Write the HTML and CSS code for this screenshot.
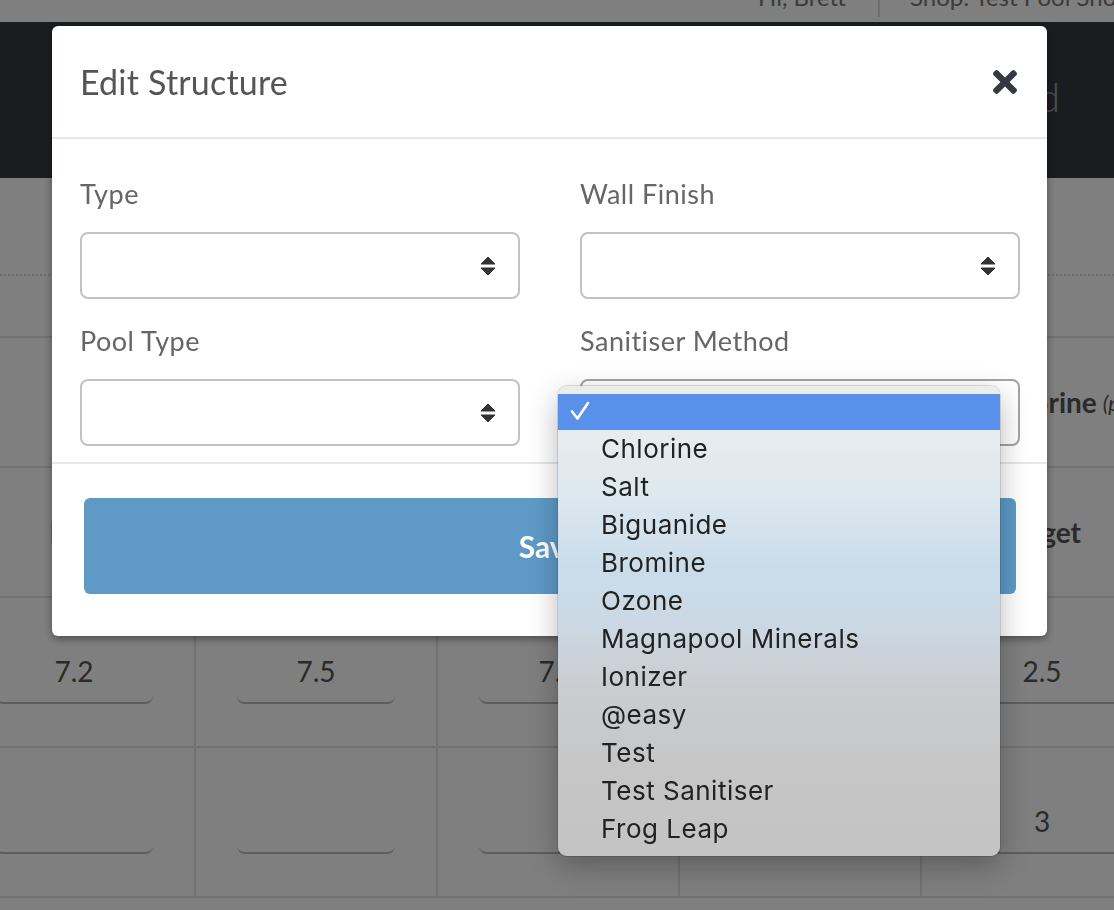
FILE: index.html
```html
<!DOCTYPE html>
<html lang="en">
<head>
<meta charset="utf-8">
<title>Edit Structure</title>
<link rel="stylesheet" href="styles.css">
</head>
<body>
  <div class="page">
    <header class="topbar">
      <span class="greet">Hi, Brett</span>
      <span class="divider"></span>
      <span class="shop">Shop: Test Pool Shop</span>
    </header>
    <nav class="navbar">
      <h1 class="brand">Water Test Dashboard</h1>
    </nav>
    <main class="content">
      <div class="toolbar"></div>
      <div class="readings">
        <div class="cell head">pH</div>
        <div class="cell head"></div>
        <div class="cell head"></div>
        <div class="cell head"></div>
        <div class="cell head">Free Chlorine <em>(ppm)</em></div>

        <div class="cell head">Min</div>
        <div class="cell head">Max</div>
        <div class="cell head">Ideal</div>
        <div class="cell head">Min</div>
        <div class="cell head">Target</div>

        <div class="cell"><input class="cell-input" value="7.2" readonly></div>
        <div class="cell"><input class="cell-input" value="7.5" readonly></div>
        <div class="cell"><input class="cell-input" value="7.4" readonly></div>
        <div class="cell"><input class="cell-input" value="1.5" readonly></div>
        <div class="cell"><input class="cell-input" value="2.5" readonly></div>

        <div class="cell"><input class="cell-input" value="" readonly></div>
        <div class="cell"><input class="cell-input" value="" readonly></div>
        <div class="cell"><input class="cell-input" value="" readonly></div>
        <div class="cell"><input class="cell-input" value="" readonly></div>
        <div class="cell"><input class="cell-input" value="3" readonly></div>
      </div>
    </main>
  </div>

  <div class="backdrop"></div>

  <div class="modal" role="dialog" aria-labelledby="modal-title">
    <div class="modal-header">
      <h2 class="modal-title" id="modal-title">Edit Structure</h2>
      <button class="close" type="button" aria-label="Close">
        <svg viewBox="0 80 352 352" width="24" height="24" aria-hidden="true">
          <path fill="currentColor" d="M242.72 256l100.07-100.07c12.28-12.28 12.28-32.19 0-44.48l-22.24-22.24c-12.28-12.28-32.19-12.28-44.48 0L176 189.28 75.930 89.21c-12.28-12.28-32.19-12.28-44.48 0L9.21 111.45c-12.28 12.28-12.28 32.19 0 44.48L109.28 256 9.21 356.07c-12.28 12.28-12.28 32.19 0 44.48l22.24 22.24c12.28 12.28 32.2 12.28 44.48 0L176 322.72l100.07 100.07c12.28 12.28 32.2 12.28 44.48 0l22.24-22.24c12.28-12.28 12.28-32.19 0-44.48L242.72 256z"/>
        </svg>
      </button>
    </div>

    <div class="modal-body">
      <div class="field">
        <label>Type</label>
        <div class="select">
          <svg class="caret" viewBox="0 0 16 20" width="16" height="20" aria-hidden="true">
            <path d="M8 1 L15 8 H1 Z M1 12 H15 L8 19 Z" fill="#333" stroke="#333" stroke-width="1" stroke-linejoin="round"/>
          </svg>
        </div>
      </div>
      <div class="field">
        <label>Wall Finish</label>
        <div class="select">
          <svg class="caret" viewBox="0 0 16 20" width="16" height="20" aria-hidden="true">
            <path d="M8 1 L15 8 H1 Z M1 12 H15 L8 19 Z" fill="#333" stroke="#333" stroke-width="1" stroke-linejoin="round"/>
          </svg>
        </div>
      </div>
      <div class="field">
        <label>Pool Type</label>
        <div class="select">
          <svg class="caret" viewBox="0 0 16 20" width="16" height="20" aria-hidden="true">
            <path d="M8 1 L15 8 H1 Z M1 12 H15 L8 19 Z" fill="#333" stroke="#333" stroke-width="1" stroke-linejoin="round"/>
          </svg>
        </div>
      </div>
      <div class="field">
        <label>Sanitiser Method</label>
        <div class="select is-open">
          <svg class="caret" viewBox="0 0 16 20" width="16" height="20" aria-hidden="true">
            <path d="M8 1 L15 8 H1 Z M1 12 H15 L8 19 Z" fill="#333" stroke="#333" stroke-width="1" stroke-linejoin="round"/>
          </svg>
        </div>
      </div>
    </div>

    <div class="modal-footer">
      <button class="btn-save" type="button">Save</button>
    </div>
  </div>

  <ul class="select-menu" role="listbox">
    <li class="selected" role="option">
      <svg class="check" viewBox="0 0 20 20" width="20" height="20" aria-hidden="true">
        <path d="M2 10.5 L7.5 17.5 L18 2" fill="none" stroke="#fff" stroke-width="2.6" stroke-linecap="round" stroke-linejoin="round"/>
      </svg>
    </li>
    <li role="option">Chlorine</li>
    <li role="option">Salt</li>
    <li role="option">Biguanide</li>
    <li role="option">Bromine</li>
    <li role="option">Ozone</li>
    <li role="option">Magnapool Minerals</li>
    <li role="option">Ionizer</li>
    <li role="option">@easy</li>
    <li role="option">Test</li>
    <li role="option">Test Sanitiser</li>
    <li role="option">Frog Leap</li>
  </ul>
</body>
</html>
```

FILE: styles.css
```css
* {
  box-sizing: border-box;
}

html,
body {
  margin: 0;
  height: 100%;
}

body {
  font-family: Lato, "Open Sans", sans-serif;
  background: #fff;
  color: #212529;
  overflow: hidden;
}

/* ---------- page behind the dialog ---------- */

.topbar {
  height: 22px;
  overflow: hidden;
  display: flex;
  align-items: flex-start;
  padding-left: 758px;
  font-size: 24px;
  color: #777;
  white-space: nowrap;
}

.topbar .greet,
.topbar .shop {
  flex-shrink: 0;
  line-height: 26px;
  margin-top: -16px;
}

.topbar .divider {
  flex-shrink: 0;
  width: 2px;
  height: 17px;
  background: #ddd;
  margin: 0 30px 0 32px;
}

.navbar {
  height: 156px;
  background: #343a40;
  display: flex;
  justify-content: flex-end;
  align-items: center;
  padding-right: 54px;
}

.brand {
  margin: 0 0 7px;
  font-size: 40px;
  font-weight: 300;
  line-height: 1;
  color: #999;
  white-space: nowrap;
}

.toolbar {
  height: 98px;
  border-bottom: 2px dotted #ddd;
}

.readings {
  display: grid;
  grid-template-columns: repeat(5, 240px);
  grid-template-rows: 128px 128px 148px 148px;
  gap: 2px;
  padding: 2px 0;
  margin: 60px 0 0 -46px;
  width: max-content;
  background: #dee2e6;
}

.cell {
  background: #fff;
  display: flex;
  align-items: center;
  justify-content: center;
}

.head {
  font-size: 28px;
  font-weight: 700;
  color: #555;
  white-space: nowrap;
}

.head em {
  font-size: 22px;
  font-weight: 400;
  margin-left: 6px;
}

.cell-input {
  width: 158px;
  height: 64px;
  padding: 0;
  border: 0;
  border-bottom: 2px solid #bbb;
  border-radius: 8px;
  background: transparent;
  font-family: Lato, "Open Sans", sans-serif;
  font-size: 28px;
  color: #555;
  text-align: center;
}

/* ---------- dialog ---------- */

.backdrop {
  position: fixed;
  inset: 0;
  background: rgba(0, 0, 0, 0.5);
}

.modal {
  position: fixed;
  left: 52px;
  top: 26px;
  width: 995px;
  background: #fff;
  border-radius: 6px;
  box-shadow: 0 3px 9px rgba(0, 0, 0, 0.4);
}

.modal-header {
  display: flex;
  align-items: center;
  justify-content: space-between;
  padding: 37px 30px 36px 28px;
  border-bottom: 2px solid #e6e7e9;
}

.modal-title {
  margin: 0;
  font-size: 34px;
  font-weight: 400;
  letter-spacing: 0.2px;
  line-height: 38px;
  color: #555;
}

.close {
  display: flex;
  width: 24px;
  height: 24px;
  padding: 0;
  border: 0;
  background: none;
  color: #343a40;
}

.modal-body {
  display: grid;
  grid-template-columns: 440px 440px;
  column-gap: 60px;
  row-gap: 24px;
  padding: 37px 27px 16px 28px;
}

.field label {
  display: block;
  margin-bottom: 20px;
  font-size: 27px;
  letter-spacing: 0.5px;
  line-height: 36px;
  color: #666;
}

.select {
  height: 67px;
  display: flex;
  align-items: center;
  justify-content: flex-end;
  padding-right: 22px;
  border: 2px solid #c2c2c2;
  border-radius: 8px;
  background: #fff;
}

.select.is-open {
  border-color: #a4a4a4;
}

.modal-footer {
  border-top: 2px solid #e6e7e9;
  padding: 34px 31px 42px 32px;
}

.btn-save {
  display: block;
  width: 100%;
  height: 96px;
  border: 0;
  border-radius: 6px;
  background: #5f9ac7;
  color: #fff;
  font-family: Lato, "Open Sans", sans-serif;
  font-size: 30px;
  font-weight: 700;
}

/* ---------- native-style option list ---------- */

.select-menu {
  position: absolute;
  left: 558px;
  top: 386px;
  width: 442px;
  margin: 0;
  padding: 8px 0;
  list-style: none;
  border-radius: 9px;
  background: linear-gradient(
    to bottom,
    #ececec 0px,
    #e8ecef 44px,
    #dde8ef 110px,
    #cadcea 180px,
    #cbd8e3 240px,
    #cacdd0 300px,
    #c6c6c6 380px,
    #c4c4c4 470px
  );
  box-shadow: 0 0 0 1px rgba(0, 0, 0, 0.12), 0 10px 30px rgba(0, 0, 0, 0.28);
  font-family: Inter, "Noto Sans", sans-serif;
  font-size: 26px;
  letter-spacing: 0.5px;
  color: #222;
}

.select-menu li {
  position: relative;
  height: 38px;
  line-height: 38px;
  padding-left: 43px;
  white-space: nowrap;
}

.select-menu li.selected {
  height: 36px;
  line-height: 36px;
  background: #5990ea;
  color: #fff;
}

.select-menu .check {
  position: absolute;
  left: 12px;
  top: 7px;
}
```
